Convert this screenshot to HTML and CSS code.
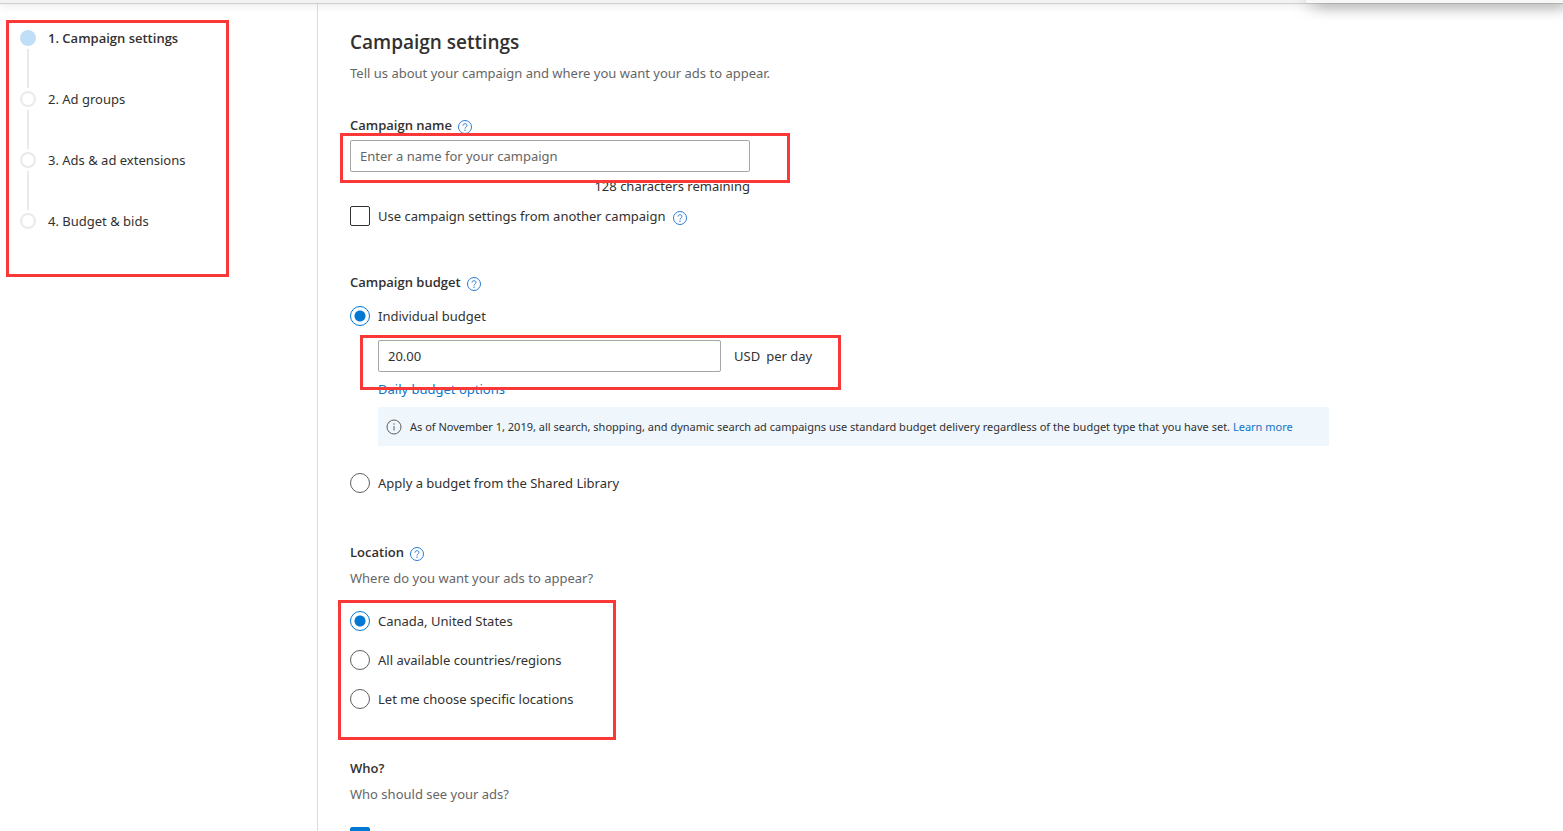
FILE: index.html
```html
<!DOCTYPE html>
<html lang="en">
<head>
  <meta charset="UTF-8" />
  <meta name="viewport" content="width=device-width, initial-scale=1.0"/>
  <title>Campaign settings</title>
  <link rel="stylesheet" href="styles.css">
</head>
<body>
  <svg class="sprite" aria-hidden="true">
    <symbol id="icon-help" viewBox="0 0 14 14">
      <circle cx="7" cy="7" r="6.5" fill="none" stroke="currentColor"/>
      <path d="M5 5.6C5 4.4 5.8 3.7 7 3.7s2 .7 2 1.7c0 1.5-2 1.6-2 3.2" fill="none" stroke="currentColor"/>
      <circle cx="7" cy="10.3" r=".7" fill="currentColor"/>
    </symbol>
    <symbol id="icon-info" viewBox="0 0 16 16">
      <circle cx="8" cy="8" r="7" fill="none" stroke="currentColor"/>
      <path d="M8 7v4.5" fill="none" stroke="currentColor"/>
      <circle cx="8" cy="5" r=".7" fill="currentColor"/>
    </symbol>
  </svg>

  <header class="topbar">
    <div class="topbar-panel"></div>
  </header>

  <div class="layout">
    <aside class="sidebar">
      <nav class="steps marked">
        <ol>
          <li class="active">1. Campaign settings</li>
          <li>2. Ad groups</li>
          <li>3. Ads &amp; ad extensions</li>
          <li>4. Budget &amp; bids</li>
        </ol>
      </nav>
    </aside>

    <main class="content">
      <h1>Campaign settings</h1>
      <p class="muted">Tell us about your campaign and where you want your ads to appear.</p>

      <section class="name">
        <div class="title">
          <label for="campaignName">Campaign name</label>
          <svg class="help"><use href="#icon-help"/></svg>
        </div>
        <div class="name-field marked">
          <input type="text" id="campaignName" placeholder="Enter a name for your campaign" />
        </div>
        <p class="remaining">128 characters remaining</p>
        <div class="option">
          <input type="checkbox" id="useSettings" />
          <label for="useSettings">Use campaign settings from another campaign</label>
          <svg class="help"><use href="#icon-help"/></svg>
        </div>
      </section>

      <section class="budget">
        <div class="title">
          <h2>Campaign budget</h2>
          <svg class="help"><use href="#icon-help"/></svg>
        </div>
        <div class="option">
          <input type="radio" name="budget" id="individual" checked />
          <label for="individual">Individual budget</label>
        </div>
        <div class="budget-details">
          <div class="amount marked">
            <input type="text" id="amount" value="20.00" aria-label="Budget amount" />
            <span>USD</span>
            <span>per day</span>
          </div>
          <a href="#" class="budget-options">Daily budget options</a>
          <div class="notice">
            <svg class="info"><use href="#icon-info"/></svg>
            <p>As of November 1, 2019, all search, shopping, and dynamic search ad campaigns use standard budget delivery regardless of the budget type that you have set. <a href="#">Learn more</a></p>
          </div>
        </div>
        <div class="option">
          <input type="radio" name="budget" id="shared" />
          <label for="shared">Apply a budget from the Shared Library</label>
        </div>
      </section>

      <section class="location">
        <div class="title">
          <h2>Location</h2>
          <svg class="help"><use href="#icon-help"/></svg>
        </div>
        <p class="muted">Where do you want your ads to appear?</p>
        <div class="location-list marked">
          <div class="option">
            <input type="radio" name="location" id="canadaUs" checked />
            <label for="canadaUs">Canada, United States</label>
          </div>
          <div class="option">
            <input type="radio" name="location" id="allRegions" />
            <label for="allRegions">All available countries/regions</label>
          </div>
          <div class="option">
            <input type="radio" name="location" id="specific" />
            <label for="specific">Let me choose specific locations</label>
          </div>
        </div>
      </section>

      <section class="who">
        <div class="title">
          <h2>Who?</h2>
        </div>
        <p class="muted">Who should see your ads?</p>
        <div class="option">
          <input type="checkbox" id="audience" aria-label="Audience" checked />
        </div>
      </section>
    </main>
  </div>
</body>
</html>
```
FILE: styles.css
```css
*, *::before, *::after {
  box-sizing: border-box;
}
body {
  font-family: 'Segoe UI', 'Noto Sans', sans-serif;
  font-size: 13px;
  line-height: 20px;
  color: #323130;
  background: white;
  margin: 0;
  height: 100vh;
  overflow: hidden;
}
h1, h2, p, ol {
  margin: 0;
  padding: 0;
}
h1, h2, .title, .steps .active {
  font-family: 'Segoe UI', 'Open Sans', sans-serif;
  font-weight: 600;
}
h1 {
  font-size: 19px;
  line-height: 28px;
  margin-bottom: 7px;
}
h2 {
  font-size: 13px;
}
a {
  color: #0f73c8;
  text-decoration: none;
}
.sprite {
  display: none;
}
.muted {
  color: #666;
}

/* top bar */
.topbar {
  position: relative;
  z-index: 1;
  height: 3px;
  background: #f3f2f1;
  box-shadow: 0 1px 1px #ccc, 0 2px 8px rgba(0, 0, 0, 0.16);
}
.topbar-panel {
  width: 257px;
  height: 3px;
  margin-left: auto;
  background: #f8f7f6;
  box-shadow: 0 2px 14px rgba(0, 0, 0, 0.5), 12px 2px 14px rgba(0, 0, 0, 0.5);
}

.layout {
  display: flex;
  min-height: 100vh;
}

/* red frames drawn over the fields */
.marked {
  position: relative;
}
.marked::after {
  content: "";
  position: absolute;
  inset: 0;
  border: 3px solid #fb3838;
  pointer-events: none;
}
.name-field::after {
  inset: -7px -40px -11px -10px;
}
.amount::after {
  inset: -5px -28px -18px -18px;
}
.location-list::after {
  inset: -11px -40px -31px -12px;
}

/* steps */
.sidebar {
  flex: 0 0 318px;
  padding: 17px 88px 0 6px;
  border-right: 1px solid #dcdcdc;
}
.steps {
  padding: 8px 14px 46px;
}
.steps ol {
  list-style: none;
}
.steps li {
  position: relative;
  padding-left: 28px;
  margin-bottom: 41px;
}
.steps li:last-child {
  margin-bottom: 0;
}
.steps li::before {
  content: "";
  position: absolute;
  left: 0;
  top: 2px;
  width: 16px;
  height: 16px;
  border: 2px solid #eaeaea;
  border-radius: 50%;
}
.steps li::after {
  content: "";
  position: absolute;
  left: 7px;
  top: 21px;
  width: 2px;
  height: 39px;
  background: #eaeaea;
}
.steps li:last-child::after {
  display: none;
}
.steps .active::before {
  background: #c0dff7;
  border-color: #c0dff7;
}

/* form */
.content {
  flex: 1;
  padding: 25px 32px 0;
}
.title {
  display: flex;
  align-items: center;
  gap: 6px;
}
.help {
  width: 14px;
  height: 14px;
  margin-top: 4px;
  color: #2b7cd3;
}
input {
  font: inherit;
  color: inherit;
  margin: 0;
}
input[type="text"] {
  display: block;
  width: 100%;
  height: 32px;
  padding: 0 9px;
  border: 1px solid #a6a6a6;
  border-radius: 2px;
}
input::placeholder {
  color: #666;
}
input[type="radio"], input[type="checkbox"] {
  appearance: none;
  width: 20px;
  height: 20px;
  border: 1px solid #605e5c;
  background: white;
}
input[type="radio"] {
  border-radius: 50%;
}
input[type="radio"]:checked {
  border-color: #0078d4;
  background: radial-gradient(circle, #0078d4 5px, transparent 6px);
}
input[type="checkbox"] {
  border-color: #323130;
  border-radius: 2px;
}
input[type="checkbox"]:checked {
  border-color: #0078d4;
  background: #0078d4;
}
.option {
  display: flex;
  align-items: center;
  gap: 8px;
}

.name {
  margin-top: 32px;
}
.name-field {
  width: 400px;
  margin-top: 5px;
}
.remaining {
  width: 400px;
  margin: 4px 0 10px;
  text-align: right;
}

.budget {
  margin-top: 46px;
}
.budget .title {
  margin-bottom: 14px;
}
.budget-details {
  margin: 14px 0 27px 28px;
}
.amount {
  display: flex;
  align-items: center;
  gap: 6px;
  width: 435px;
}
.amount input[type="text"] {
  width: 343px;
  margin-right: 7px;
}
.budget-options {
  display: block;
  margin: 7px 0 8px;
}
.notice {
  display: flex;
  align-items: center;
  gap: 8px;
  max-width: 951px;
  min-height: 39px;
  padding: 0 8px;
  background: #eff6fc;
  font-size: 11px;
}
.info {
  flex: none;
  width: 16px;
  height: 16px;
  color: #605e5c;
}

.location {
  margin-top: 49px;
}
.location .muted, .who .muted {
  margin-top: 6px;
}
.location-list {
  display: grid;
  gap: 19px;
  width: 226px;
  margin-top: 23px;
}

.who {
  margin-top: 49px;
}
.who .option {
  margin-top: 23px;
}
```
